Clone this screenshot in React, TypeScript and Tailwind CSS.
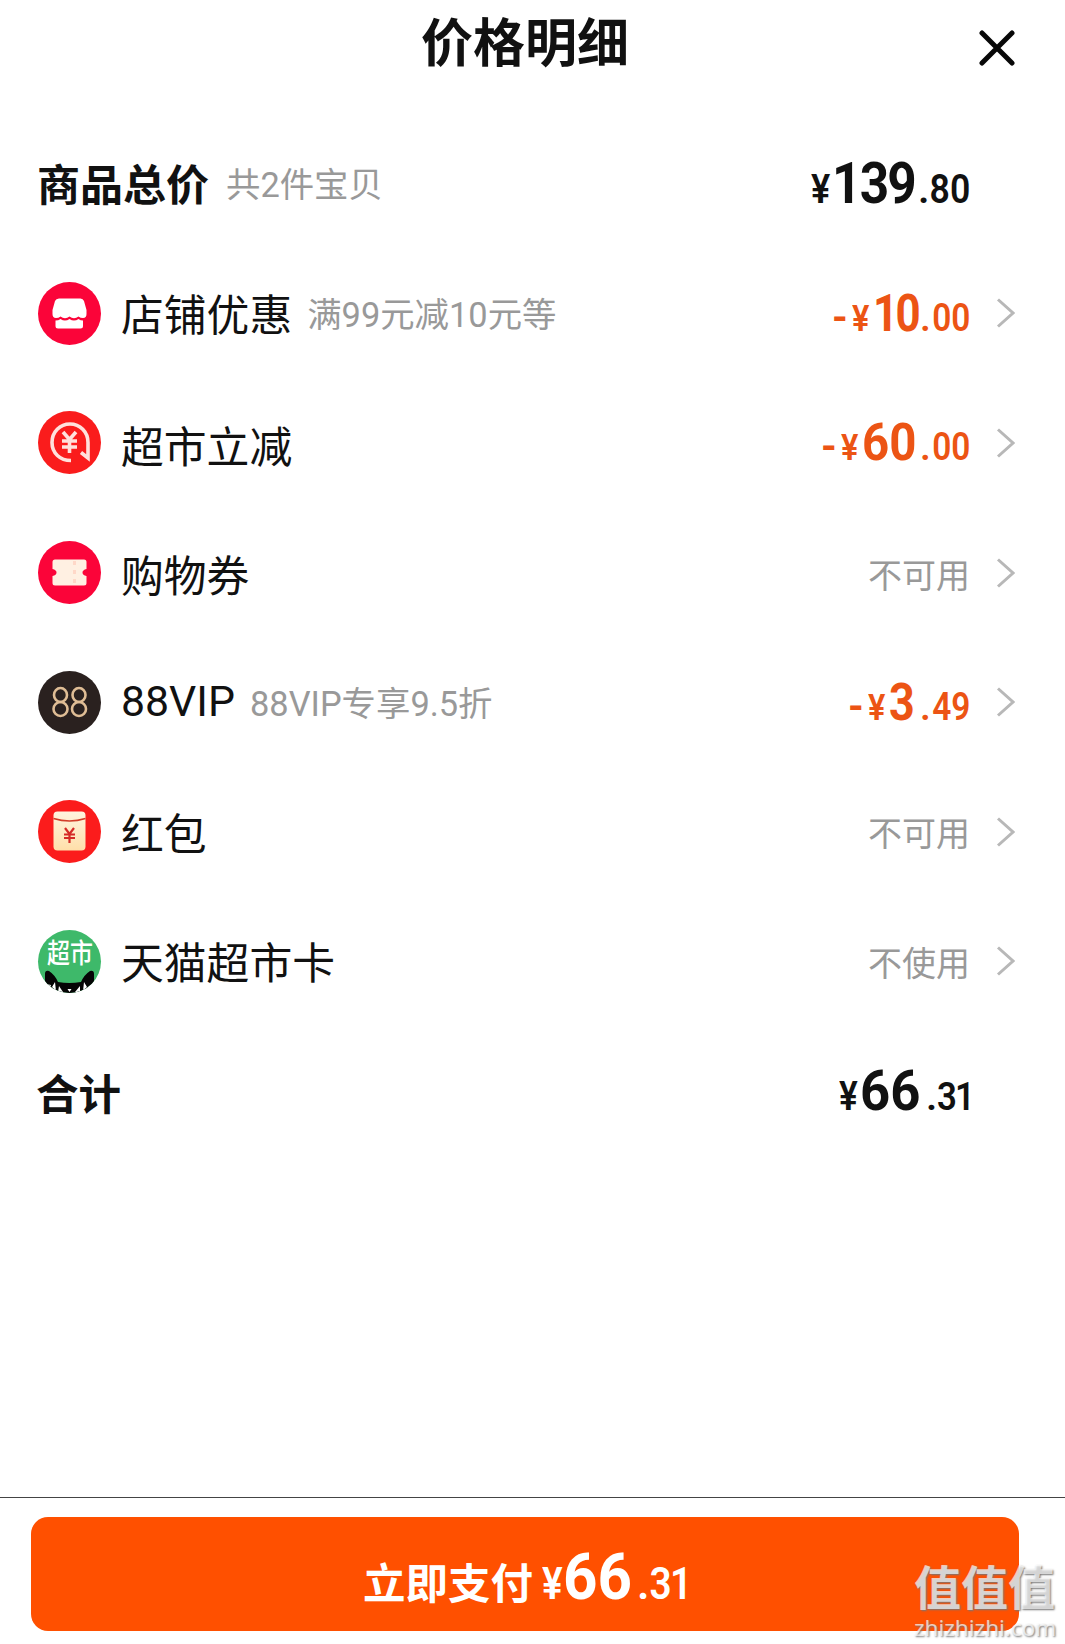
import type { ReactNode } from "react";
import { clsx } from "clsx";

type PriceProps = {
  sign?: string;
  integer: string;
  decimal: string;
  className?: string;
  currencyClass?: string;
  integerClass: string;
  digitsClass?: string;
  decimalClass: string;
  centsClass?: string;
};

type Row = {
  id: string;
  icon: ReactNode;
  label: string;
  note?: string;
  price?: PriceProps;
  status?: string;
  labelClass?: string;
  noteClass?: string;
  statusClass?: string;
};

const discount = {
  sign: "-",
  className: "pt-[13px] text-[#ec5414]",
  currencyClass: "text-[37px]",
  decimalClass: "w-[50px] text-[38px]",
};

const rows: Row[] = [
  {
    id: "shop",
    icon: <ShopIcon />,
    label: "店铺优惠",
    note: "满99元减10元等",
    labelClass: "pt-[5px]",
    noteClass: "-mt-[1px]",
    price: { ...discount, integer: "10", decimal: "00", integerClass: "w-[47px] text-[51px] tracking-[-3px]", digitsClass: "scale-x-[0.86]" },
  },
  {
    id: "market",
    icon: <RefundIcon />,
    label: "超市立减",
    labelClass: "pt-[10px]",
    price: { ...discount, integer: "60", decimal: "00", integerClass: "w-[58px] text-[51px]", digitsClass: "scale-x-[0.93]" },
  },
  { id: "coupon", icon: <CouponIcon />, label: "购物券", labelClass: "pt-[9px]", status: "不可用", statusClass: "pt-[8px]" },
  {
    id: "vip",
    icon: <VipIcon />,
    label: "88VIP",
    note: "88VIP专享9.5折",
    labelClass: "-mt-[2px]",
    price: { ...discount, integer: "3", decimal: "49", integerClass: "w-[31px] text-[51px]", digitsClass: "scale-x-[0.88]" },
  },
  { id: "packet", icon: <PacketIcon />, label: "红包", labelClass: "pt-[7px]", status: "不可用", statusClass: "pt-[6px]" },
  { id: "card", icon: <MarketCardIcon />, label: "天猫超市卡", labelClass: "pt-[6px]", status: "不使用", statusClass: "pt-[6px]" },
];

export default function App() {
  return (
    <div className="flex h-[1644px] w-[1065px] flex-col overflow-hidden bg-white font-['Roboto','Noto_Sans_CJK_SC',sans-serif] text-[#111111]">
      <header className="grid h-[119px] grid-cols-[1fr_auto_1fr] items-start pr-[49px] pl-[34px]">
        <h1 className="col-start-2 pt-[7px] text-[52px] leading-[76px] font-bold">价格明细</h1>
        <button className="mt-[30px] justify-self-end" aria-label="关闭">
          <svg className="h-[36px] w-[38px]" viewBox="0 0 38 36" fill="none" stroke="#080808" strokeWidth="5" strokeLinecap="round">
            <path d="M4 3 34 33M34 3 4 33" />
          </svg>
        </button>
      </header>

      <main>
        <div className="flex h-[129.6px] items-center justify-between pr-[95px] pl-[37px]">
          <div className="flex items-baseline gap-[17px] pt-[5px]">
            <span className="text-[43px] font-bold">商品总价</span>
            <span className="self-center text-[34.4px] text-[#999999]">共2件宝贝</span>
          </div>
          <Price
            integer="139"
            decimal="80"
            className="pt-[15px]"
            currencyClass="text-[41px]"
            integerClass="w-[86px] text-[57px] tracking-[-2px]"
            digitsClass="scale-x-[0.9]"
            decimalClass="w-[52px] text-[40.5px]"
          />
        </div>

        {rows.map((row) => (
          <div key={row.id} className="flex h-[129.6px] items-center pr-[50px] pl-[38px]">
            <div className="mr-[20px] size-[63px] shrink-0">{row.icon}</div>
            <div className={clsx("flex flex-1 items-baseline gap-[15px]", row.labelClass)}>
              <span className="text-[42.8px]">{row.label}</span>
              {row.note && (
                <span className={clsx("text-[34.4px] text-[#999999]", row.noteClass && "self-center", row.noteClass)}>{row.note}</span>
              )}
            </div>
            {row.price && <Price {...row.price} />}
            {row.status && <span className={clsx("text-[34px] text-[#999999]", row.statusClass)}>{row.status}</span>}
            <svg className="ml-[26px] h-[30px] w-[19px]" viewBox="0 0 19 30" fill="none" stroke="#b8b8b8" strokeWidth="3">
              <path d="m2 1.500 15 13.500L2 28.500" />
            </svg>
          </div>
        ))}

        <div className="flex h-[129.6px] items-center justify-between pr-[95px] pl-[36px]">
          <span className="pt-[10px] text-[42.5px] font-bold">合计</span>
          <Price
            integer="66"
            decimal="31"
            className="pt-[14px]"
            currencyClass="text-[40px]"
            integerClass="w-[66px] text-[56px]"
            digitsClass="scale-x-[0.94]"
            decimalClass="w-[44px] text-[39.5px]"
            centsClass="-mr-[3px] tracking-[-2px]"
          />
        </div>
      </main>

      <footer className="relative mt-auto h-[147px] border-t border-[#444444] pt-[19px] pr-[46px] pl-[31px]">
        <button className="flex h-[114px] w-full items-baseline justify-center rounded-[17px] bg-[#ff5000] pt-[26px] text-white">
          <span className="mr-[9px] text-[42.5px] font-bold">立即支付</span>
          <Price
            integer="66"
            decimal="31"
            currencyClass="text-[44px]"
            integerClass="w-[74px] text-[64px]"
            digitsClass="scale-x-[0.94]"
            decimalClass="w-[50px] text-[44px]"
            centsClass="-mr-[3px] tracking-[-2px]"
          />
        </button>
        <div className="absolute right-[9px] bottom-[3px] flex w-[142px] flex-col text-white/70 [text-shadow:1px_1px_2px_#777777]">
          <span className="text-[47px] leading-[52px] font-bold">值值值</span>
          <span className="font-['Noto_Sans'] text-[22.5px] leading-[26px]">zhizhizhi.com</span>
        </div>
      </footer>
    </div>
  );
}

function Price({ sign, integer, decimal, className, currencyClass, integerClass, digitsClass, decimalClass, centsClass }: PriceProps) {
  return (
    <div className={clsx("flex items-baseline leading-[70px] font-bold whitespace-nowrap", className)}>
      {sign && <span className="w-[20px] text-[40px]">{sign}</span>}
      <span className="w-[21px]">
        <span className={clsx("inline-block origin-left scale-x-[0.88] font-semibold", currencyClass)}>¥</span>
      </span>
      <span className={integerClass}>
        <span className={clsx("inline-block origin-left", digitsClass)}>{integer}</span>
      </span>
      <span className={clsx("flex justify-end font-semibold", decimalClass)}>
        <span className="flex flex-1">.</span>
        <span className={clsx("-ml-[12px] inline-block origin-right scale-x-[0.88]", centsClass)}>{decimal}</span>
      </span>
    </div>
  );
}

function ShopIcon() {
  return (
    <svg viewBox="0 0 63 63">
      <circle cx="31.500" cy="31.500" r="31.500" fill="#fb0439" />
      <path
        fill="#fff"
        d="M21 16.500h21.500q2.500 0 3.500 2.500l2.500 9v4q0 4-3.500 4-2.500 0-4.500-1.500-4.500 3.500-9 0-4.500 3.500-9 0-2 1.500-4.500 1.500-3.500 0-3.500-4v-4l2.500-9q1-2.500 4-2.500Z"
      />
      <path fill="#fff" d="M17.500 38.500q3 0 5-1.500 4.500 3 9 0 4.500 3 9 0 2 1.500 4.500 1.500v5.500q0 2.500-2.500 2.500H20q-2.500 0-2.500-2.500Z" />
    </svg>
  );
}

function RefundIcon() {
  return (
    <svg viewBox="0 0 63 63" fill="none" stroke="#ffe1dc">
      <circle cx="31.500" cy="31.500" r="31.500" fill="#fa1c1c" stroke="none" />
      <path strokeWidth="3.600" d="M33 49.500C22 49.500 14 42 14 31.500S22 13 32 13s18 8 18 18.500V47l-7-5.500" />
      <path strokeWidth="3.600" d="m25 21 6.500 7.500L38 21M31.500 29v13M24 30h15M24 36h15" />
    </svg>
  );
}

function CouponIcon() {
  return (
    <svg viewBox="0 0 63 63">
      <circle cx="31.500" cy="31.500" r="31.500" fill="#fb0439" />
      <path fill="#fff0e2" d="M17 18.500h29q2.500 0 2.500 2.500v7q-4 1-4 3.500t4 3.500v7q0 2.500-2.500 2.500H17q-2.500 0-2.500-2.500v-7q4-1 4-3.500t-4-3.500v-7q0-2.500 2.500-2.500Z" />
      <path stroke="#ffd8c8" strokeWidth="3" strokeDasharray="4 5" d="M36.500 20v24" />
    </svg>
  );
}

function VipIcon() {
  return (
    <svg viewBox="0 0 63 63" fill="none" stroke="#dfbd95" strokeWidth="2.600">
      <circle cx="31.500" cy="31.500" r="31.500" fill="#2a211f" stroke="none" />
      <ellipse cx="22.500" cy="24" rx="6.500" ry="7" />
      <ellipse cx="22.500" cy="38" rx="7" ry="7" />
      <ellipse cx="41" cy="24" rx="6.500" ry="7" />
      <ellipse cx="41" cy="38" rx="7" ry="7" />
    </svg>
  );
}

function PacketIcon() {
  return (
    <svg viewBox="0 0 63 63" fill="none">
      <defs>
        <linearGradient id="packet" x2="0" y2="1">
          <stop stopColor="#fff4df" />
          <stop offset="1" stopColor="#ffdfa9" />
        </linearGradient>
      </defs>
      <circle cx="31.500" cy="31.500" r="31.500" fill="#fb1c1c" />
      <rect x="15.500" y="11.500" width="32" height="39" rx="4" fill="url(#packet)" />
      <path stroke="#d33c28" strokeWidth="1.600" d="M15.500 18.500q16 5 32 0" />
      <path stroke="#d52a26" strokeWidth="2.200" d="m27 28 4.500 6 4.500-6M31.500 34v9M26 34.500h11M26 38h11" />
    </svg>
  );
}

function MarketCardIcon() {
  return (
    <div className="relative size-[63px] overflow-hidden rounded-full bg-[#3eb96a]">
      <span className="absolute top-[5px] left-[9px] origin-top scale-y-[1.2] text-[23px] leading-[32px] font-medium text-white">超市</span>
      <svg className="absolute inset-0" viewBox="0 0 63 63">
        <path fill="#050505" d="M7 44q0-4 4-3 6 4 9 11 11 2 23 0 3-7 9-11 4-1 4 3v19H7Z" />
        <path fill="#fff" d="m14 57 3-5 1 9ZM20 62l1-6 4 6ZM42 62v-6l-5 6ZM49 57l-3-5-1 9ZM29.500 59h4l-2 3ZM8 54l5 1-2 6Z" />
      </svg>
    </div>
  );
}
